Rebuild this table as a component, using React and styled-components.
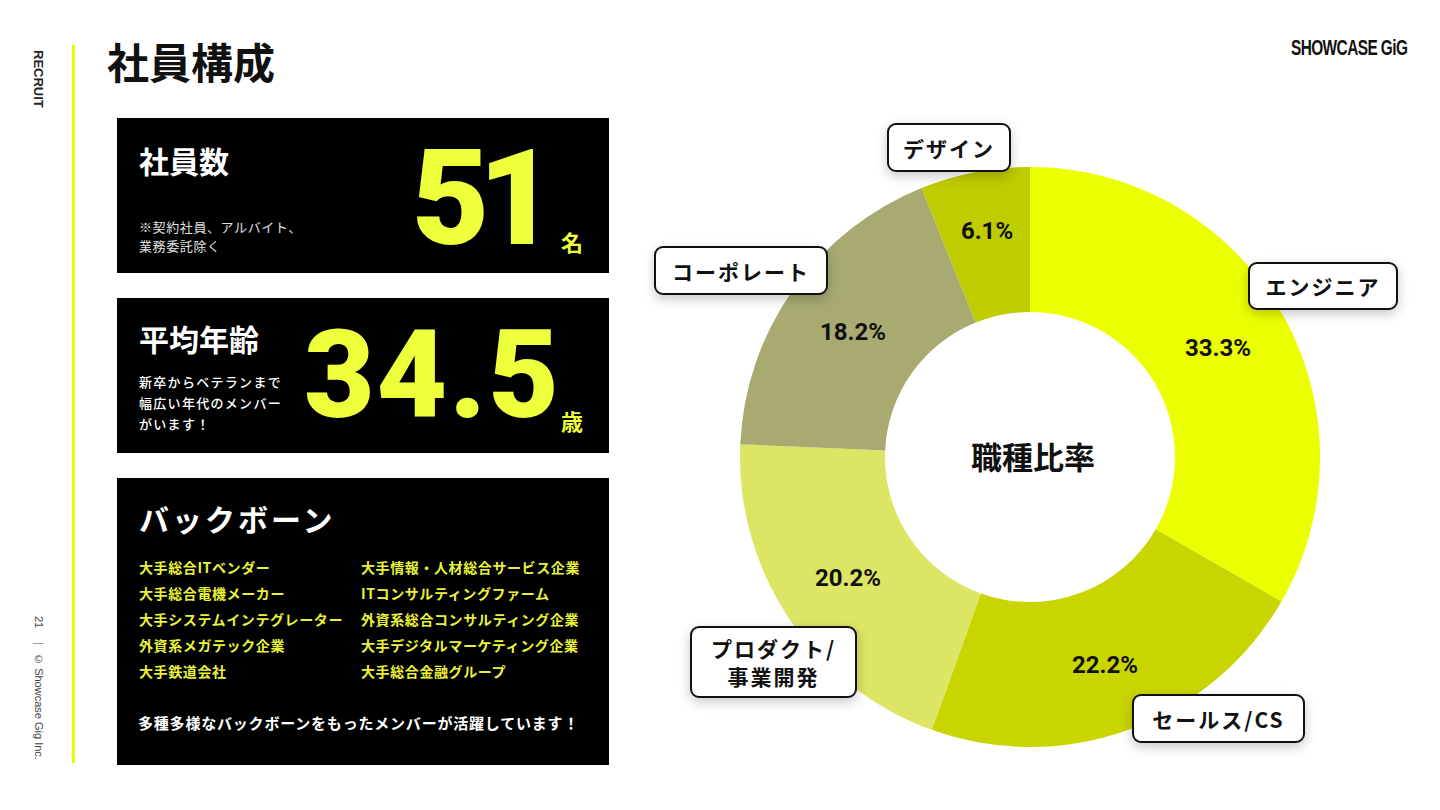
import React from "react";
import styled, { createGlobalStyle } from "styled-components";

const GlobalStyle = createGlobalStyle`
  html, body {
    margin: 0;
    padding: 0;
    background: #fff;
  }
  body {
    font-family: "Noto Sans CJK JP", "Noto Sans", sans-serif;
    color: #111;
  }
  * {
    box-sizing: border-box;
  }
`;

const JP = `"Noto Sans CJK JP", "Noto Sans", sans-serif`;
const YELLOW = "#EEFF3C";
const LIST_YELLOW = "#E9F23A";

const Page = styled.div`
  display: flex;
  width: 1440px;
  height: 810px;
  overflow: hidden;
  background: #fff;
`;

const Side = styled.aside`
  width: 72px;
  display: flex;
  flex-direction: column;
  align-items: center;
  justify-content: space-between;
  padding: 50px 0 50px 4px;
`;

const VText = styled.div`
  writing-mode: vertical-rl;
  font-family: "Liberation Sans", Arial, sans-serif;
  font-size: ${(p) => p.size || 12}px;
  font-weight: ${(p) => (p.bold ? 700 : 400)};
  color: ${(p) => p.color || "#222"};
  line-height: 1;
  white-space: nowrap;
`;

const Sep = styled.span`
  margin: 14px 0 8px;
  color: #999;
`;

const Rail = styled.div`
  width: 3px;
  height: 718px;
  margin-top: 45px;
  background: #E6FF00;
`;

const Main = styled.main`
  flex: 1;
  display: flex;
  flex-direction: column;
  padding: 0 33px 0 32px;
`;

const Header = styled.header`
  height: 118px;
  display: flex;
  justify-content: space-between;
  align-items: flex-start;
  padding-top: 40px;
`;

const Title = styled.h1`
  margin: 0;
  font-family: ${JP};
  font-size: 42px;
  font-weight: 700;
  line-height: 1;
  color: #111;
`;

const Logo = styled.div`
  margin-top: -3px;
  font-family: "Liberation Sans", Arial, sans-serif;
  font-size: 22px;
  font-weight: 700;
  letter-spacing: -0.8px;
  line-height: 1;
  color: #111;
  transform: scaleX(0.7);
  transform-origin: right center;
  white-space: nowrap;
`;

const Body = styled.div`
  display: flex;
  align-items: flex-start;
`;

const Cards = styled.div`
  width: 492px;
  margin-left: 10px;
  display: flex;
  flex-direction: column;
  gap: 25px;
`;

const StatCard = styled.section`
  height: 155px;
  background: #000;
  color: #fff;
  display: flex;
  justify-content: space-between;
  padding: ${(p) => p.pad};
`;

const StatInfo = styled.div`
  display: flex;
  flex-direction: column;
  justify-content: ${(p) => (p.spread ? "space-between" : "flex-start")};
  gap: ${(p) => p.gap || 0}px;
`;

const CardTitle = styled.h2`
  margin: 0;
  font-family: ${JP};
  font-size: 30px;
  font-weight: 700;
  line-height: 1;
  letter-spacing: ${(p) => p.spacing || 0}px;
  color: #fff;
`;

const Note = styled.p`
  margin: 0;
  font-family: ${JP};
  font-size: 13px;
  font-weight: ${(p) => (p.bold ? 500 : 400)};
  line-height: ${(p) => p.lh}px;
  letter-spacing: ${(p) => p.spacing}px;
  color: ${(p) => (p.bold ? "#fff" : "#e2e2e2")};
`;

const NumberRow = styled.div`
  align-self: flex-end;
  display: flex;
  align-items: flex-end;
  margin-bottom: ${(p) => p.mb}px;
`;

const BigNumber = styled.span`
  font-family: Roboto, "Liberation Sans", sans-serif;
  font-weight: 900;
  font-size: ${(p) => p.size}px;
  line-height: 1;
  letter-spacing: ${(p) => p.spacing}px;
  color: ${YELLOW};
`;

const Unit = styled.span`
  font-family: ${JP};
  font-weight: 700;
  font-size: 22px;
  line-height: 1;
  color: ${YELLOW};
  margin-left: ${(p) => p.ml}px;
  margin-bottom: ${(p) => p.mb}px;
`;

const BackCard = styled.section`
  height: 287px;
  background: #000;
  color: #fff;
  padding: 25px 24px 0 22px;
  display: flex;
  flex-direction: column;
`;

const CompanyGrid = styled.ul`
  list-style: none;
  margin: 21px 0 0;
  padding: 0;
  display: grid;
  grid-template-columns: 222px 1fr;
  grid-auto-rows: 26px;
`;

const Company = styled.li`
  font-family: ${JP};
  font-size: 14px;
  font-weight: 700;
  line-height: 26px;
  letter-spacing: 0.6px;
  color: ${LIST_YELLOW};
  white-space: nowrap;
`;

const Closing = styled.p`
  margin: 28px 0 0 -1px;
  font-family: ${JP};
  font-size: 15px;
  font-weight: 700;
  line-height: 22px;
  letter-spacing: 0.8px;
  color: #fff;
  white-space: nowrap;
`;

const ChartArea = styled.div`
  position: relative;
  width: 767px;
  height: 650px;
  margin-left: 31px;
`;

const Donut = styled.svg`
  display: block;
  margin: 49px 0 0 100px;
`;

const Callout = styled.div`
  position: absolute;
  left: ${(p) => p.x}px;
  top: ${(p) => p.y}px;
  width: ${(p) => p.w}px;
  height: ${(p) => p.h}px;
  display: flex;
  align-items: center;
  justify-content: center;
  text-align: center;
  background: #fff;
  border: 2px solid #111;
  border-radius: 9px;
  box-shadow: 0 4px 12px rgba(0, 0, 0, 0.22);
  font-family: ${JP};
  font-size: 21px;
  font-weight: 700;
  line-height: 28px;
  letter-spacing: 2px;
  color: #111;
`;

const slices = [
  { value: 33.3, color: "#ECFF00", label: [478, 181] },
  { value: 22.2, color: "#C9D500", label: [365, 498] },
  { value: 20.2, color: "#DCE564", label: [108, 411] },
  { value: 18.2, color: "#A8AA72", label: [113, 165] },
  { value: 6.1, color: "#BECC00", label: [247, 64] },
];

const callouts = [
  { text: "デザイン", x: 247, y: 5, w: 124, h: 49 },
  { text: "コーポレート", x: 14, y: 128, w: 174, h: 49 },
  { text: "エンジニア", x: 608, y: 144, w: 150, h: 48 },
  { text: ["プロダクト/", "事業開発"], x: 50, y: 508, w: 167, h: 72 },
  { text: "セールス/CS", x: 492, y: 576, w: 173, h: 49 },
];

const companiesLeft = [
  "大手総合ITベンダー",
  "大手総合電機メーカー",
  "大手システムインテグレーター",
  "外資系メガテック企業",
  "大手鉄道会社",
];

const companiesRight = [
  "大手情報・人材総合サービス企業",
  "ITコンサルティングファーム",
  "外資系総合コンサルティング企業",
  "大手デジタルマーケティング企業",
  "大手総合金融グループ",
];

const C = 290;
const R = 290;
const r = 145;

const point = (rad, deg) => {
  const a = (deg * Math.PI) / 180;
  return [C + rad * Math.sin(a), C - rad * Math.cos(a)];
};

const arcPath = (from, to) => {
  const large = to - from > 180 ? 1 : 0;
  const [x1, y1] = point(R, from);
  const [x2, y2] = point(R, to);
  const [x3, y3] = point(r, to);
  const [x4, y4] = point(r, from);
  return `M${x1} ${y1} A${R} ${R} 0 ${large} 1 ${x2} ${y2} L${x3} ${y3} A${r} ${r} 0 ${large} 0 ${x4} ${y4} Z`;
};

const JobChart = () => {
  let start = 0;
  const arcs = slices.map((s) => {
    const end = start + (s.value / 100) * 360;
    const d = arcPath(start, end);
    start = end;
    return { ...s, d };
  });

  return (
    <ChartArea>
      <Donut width="580" height="580" viewBox="0 0 580 580">
        {arcs.map((a) => (
          <path key={a.value} d={a.d} fill={a.color} />
        ))}
        {arcs.map((a) => (
          <text
            key={"t" + a.value}
            x={a.label[0]}
            y={a.label[1]}
            textAnchor="middle"
            dominantBaseline="central"
            fontFamily="Roboto, sans-serif"
            fontWeight="700"
            fontSize="24"
            fill="#111"
          >
            {a.value.toFixed(1)}%
          </text>
        ))}
        <text
          x="293"
          y="288"
          textAnchor="middle"
          dominantBaseline="central"
          fontFamily={JP}
          fontWeight="700"
          fontSize="31"
          fill="#111"
        >
          職種比率
        </text>
      </Donut>
      {callouts.map((c) => (
        <Callout key={c.x} x={c.x} y={c.y} w={c.w} h={c.h}>
          {Array.isArray(c.text) ? (
            <span>
              {c.text[0]}
              <br />
              {c.text[1]}
            </span>
          ) : (
            c.text
          )}
        </Callout>
      ))}
    </ChartArea>
  );
};

const App = () => {
  return (
    <>
      <GlobalStyle />
      <Page>
        <Side>
          <VText bold size={13}>
            RECRUIT
          </VText>
          <VText size={11} color="#444">
            21
            <Sep>|</Sep>© Showcase Gig Inc.
          </VText>
        </Side>
        <Rail />
        <Main>
          <Header>
            <Title>社員構成</Title>
            <Logo>SHOWCASE GiG</Logo>
          </Header>
          <Body>
            <Cards>
              <StatCard pad="27px 26px 18px 22px">
                <StatInfo spread>
                  <CardTitle>社員数</CardTitle>
                  <Note lh={19} spacing={0.6}>
                    ※契約社員、アルバイト、
                    <br />
                    業務委託除く
                  </Note>
                </StatInfo>
                <NumberRow mb={-11}>
                  <BigNumber size={134} spacing={-11}>
                    51
                  </BigNumber>
                  <Unit ml={16} mb={14}>
                    名
                  </Unit>
                </NumberRow>
              </StatCard>

              <StatCard pad="25px 26px 18px 22px">
                <StatInfo gap={18}>
                  <CardTitle>平均年齢</CardTitle>
                  <Note bold lh={21} spacing={1.3}>
                    新卒からベテランまで
                    <br />
                    幅広い年代のメンバー
                    <br />
                    がいます！
                  </Note>
                </StatInfo>
                <NumberRow mb={-2}>
                  <BigNumber size={122} spacing={2}>
                    34.5
                  </BigNumber>
                  <Unit ml={0} mb={6}>
                    歳
                  </Unit>
                </NumberRow>
              </StatCard>

              <BackCard>
                <CardTitle spacing={3}>バックボーン</CardTitle>
                <CompanyGrid>
                  {companiesLeft.map((c, i) => (
                    <React.Fragment key={c}>
                      <Company>{c}</Company>
                      <Company>{companiesRight[i]}</Company>
                    </React.Fragment>
                  ))}
                </CompanyGrid>
                <Closing>多種多様なバックボーンをもったメンバーが活躍しています！</Closing>
              </BackCard>
            </Cards>
            <JobChart />
          </Body>
        </Main>
      </Page>
    </>
  );
};

export default App;
